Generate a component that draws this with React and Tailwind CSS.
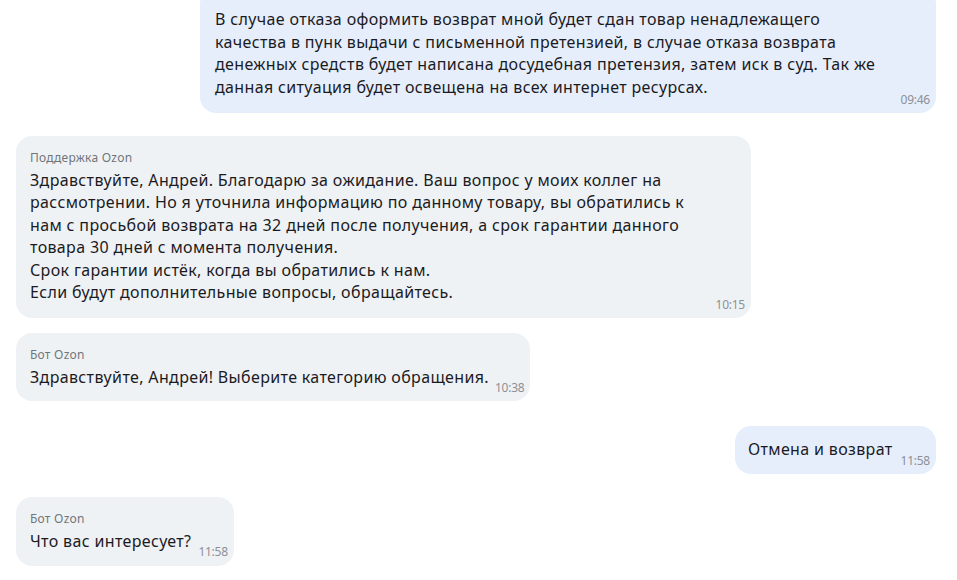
import React from "react";

// Chat transcript with Ozon support — bubbles stacked in a single column
const Time = ({ children, className = "" }) => (
    <span className={"text-[12px] leading-[14px] tracking-[-0.02em] text-[#8d9095] whitespace-nowrap " + className}>{children}</span>
);

const Name = ({ children }) => (
    <div className="text-[12px] leading-[16px] tracking-[0.02em] text-[#70757a]">{children}</div>
);

const body = "text-[16px] leading-[22.5px] tracking-[0.022em] whitespace-nowrap";

export default function App() {
    return (
        <div className="w-[957px] h-[580px] overflow-hidden bg-white text-[#1b1b1f] font-['Noto_Sans',sans-serif] pl-4 pr-[21px]">
            {/* Outgoing message, top cut off by the window */}
            <div className="flex justify-end -mt-[12px]">
                <div className="w-[736px] bg-[#e6eefc] rounded-2xl pl-[15px] pr-[6px] pt-[20px] pb-[6px]">
                    <div className={body + " leading-[22.7px]"}>
                        В случае отказа оформить возврат мной будет сдан товар ненадлежащего<br />
                        качества в пунк выдачи с письменной претензией, в случае отказа возврата<br />
                        денежных средств будет написана досудебная претензия, затем иск в суд. Так же<br />
                        данная ситуация будет освещена на всех интернет ресурсах.
                    </div>
                    <div className="flex justify-end -mt-[6px]">
                        <Time>09:46</Time>
                    </div>
                </div>
            </div>

            {/* Support reply */}
            <div className="flex mt-[23px]">
                <div className="w-[735px] bg-[#eff2f5] rounded-2xl pl-[14px] pr-[6px] pt-[14px] pb-[6px]">
                    <Name>Поддержка Ozon</Name>
                    <div className={body + " mt-[3px]"}>
                        Здравствуйте, Андрей. Благодарю за ожидание. Ваш вопрос у моих коллег на<br />
                        рассмотрении. Но я уточнила информацию по данному товару, вы обратились к<br />
                        нам с просьбой возврата на 32 дней после получения, а срок гарантии данного<br />
                        товара 30 дней с момента получения.<br />
                        Срок гарантии истёк, когда вы обратились к нам.<br />
                        Если будут дополнительные вопросы, обращайтесь.
                    </div>
                    <div className="flex justify-end -mt-[6px]">
                        <Time>10:15</Time>
                    </div>
                </div>
            </div>

            {/* Bot greeting */}
            <div className="flex mt-[15px]">
                <div className="bg-[#eff2f5] rounded-2xl pl-[14px] pr-[6px] pt-[14px] pb-[5px]">
                    <Name>Бот Ozon</Name>
                    <div className="flex items-end gap-[6px] mt-[3px]">
                        <div className={body}>Здравствуйте, Андрей! Выберите категорию обращения.</div>
                        <Time className="translate-y-[7px]">10:38</Time>
                    </div>
                    <div className="h-[8px]" />
                </div>
            </div>

            {/* Outgoing choice */}
            <div className="flex justify-end mt-[25px]">
                <div className="bg-[#e6eefc] rounded-2xl pl-[13px] pr-[6px] pt-[12px] pb-[6px]">
                    <div className="flex items-end gap-[8px]">
                        <div className={body}>Отмена и возврат</div>
                        <Time className="translate-y-[7px]">11:58</Time>
                    </div>
                    <div className="h-[7px]" />
                </div>
            </div>

            {/* Bot question */}
            <div className="flex mt-[23px]">
                <div className="bg-[#eff2f5] rounded-2xl pl-[14px] pr-[6px] pt-[14px] pb-[6px]">
                    <Name>Бот Ozon</Name>
                    <div className="flex items-end gap-[7px] mt-[3px]">
                        <div className={body}>Что вас интересует?</div>
                        <Time className="translate-y-[7px]">11:58</Time>
                    </div>
                    <div className="h-[8px]" />
                </div>
            </div>
        </div>
    );
}
